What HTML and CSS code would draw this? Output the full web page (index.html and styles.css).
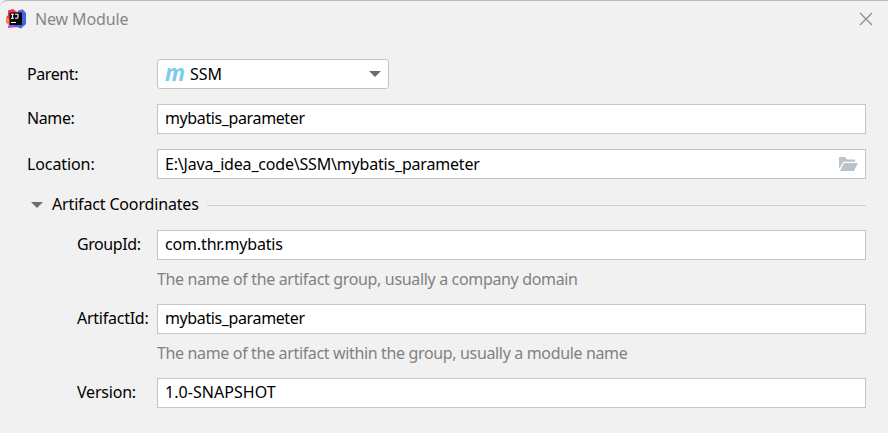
FILE: index.html
```html
<!DOCTYPE html>
<html lang="en">
<head>
<meta charset="utf-8">
<title>New Module</title>
<link rel="stylesheet" href="styles.css">
</head>
<body>
<main class="dialog">
  <header class="titlebar">
    <svg class="logo" width="20" height="20" viewBox="0 0 20 20">
      <path d="M2 1.500 7 0l4 3-5 8-6-2 2-3z" fill="#fc3158"/>
      <path d="M0 9l4 1v6l-4-2z" fill="#f68b2a"/>
      <path d="M3 14l6 1 3 3-10 1z" fill="#b14bd8"/>
      <path d="M9 4l7-3.500L20 4v11l-5 4.500L8 17z" fill="#3e67dc"/>
      <path d="M12 1.500l5-1 2 3-7 1z" fill="#6a5be4"/>
      <rect x="3.500" y="3.500" width="12.500" height="12.500" fill="#080808"/>
      <path d="M5 5.200h3M6.500 5.200v4M5 9.200h3M9 5.200h3v3q0 1-1 1H9M5 13.500h5" stroke="#fff" stroke-width="1.100" fill="none"/>
    </svg>
    <h1 class="title"><span class="t t-title">New Module</span></h1>
    <svg class="close" width="14" height="14" viewBox="0 0 14 14"><path d="M1 1l12 12M13 1L1 13" stroke="#8b8b8b" stroke-width="1.200"/></svg>
  </header>
  <form class="form">
    <div class="row row-parent">
      <span class="label"><span class="t t-parent">Parent:</span></span>
      <div class="field select">
        <span class="maven">m</span>
        <span class="t t-ssm">SSM</span>
        <svg class="arrow" width="12" height="6" viewBox="0 0 12 6"><path d="M0 0h12L6 6z" fill="#6e6e6e"/></svg>
      </div>
    </div>
    <div class="row row-name">
      <span class="label"><span class="t t-name">Name:</span></span>
      <div class="field"><span class="t t-module">mybatis_parameter</span></div>
    </div>
    <div class="row row-location">
      <span class="label"><span class="t t-location">Location:</span></span>
      <div class="field"><span class="t t-path">E:\Java_idea_code\SSM\mybatis_parameter</span>
        <svg class="folder" width="19" height="14" viewBox="0 0 19 14"><path d="M0 12V0h6l2 2.500h8v2.300H4.500z" fill="#bcc3c8"/><path d="M5 6h14l-4 8H1z" fill="#bcc3c8"/></svg>
      </div>
    </div>
    <div class="section">
      <svg class="arrow" width="12" height="6" viewBox="0 0 12 6"><path d="M0 0h12L6 6z" fill="#6e6e6e"/></svg>
      <span class="section-name"><span class="t t-section">Artifact Coordinates</span></span>
      <span class="rule"></span>
    </div>
    <div class="row nested">
      <span class="label"><span class="t t-group">GroupId:</span></span>
      <div class="field"><span class="t t-groupvalue">com.thr.mybatis</span></div>
    </div>
    <p class="hint"><span class="t t-hint1">The name of the artifact group, usually a company domain</span></p>
    <div class="row nested">
      <span class="label"><span class="t t-artifact">ArtifactId:</span></span>
      <div class="field"><span class="t t-module">mybatis_parameter</span></div>
    </div>
    <p class="hint"><span class="t t-hint2">The name of the artifact within the group, usually a module name</span></p>
    <div class="row nested">
      <span class="label"><span class="t t-version">Version:</span></span>
      <div class="field"><span class="t t-versionvalue">1.0-SNAPSHOT</span></div>
    </div>
  </form>
</main>
</body>
</html>
```
FILE: styles.css
```css
* { box-sizing: border-box; }
body { margin: 0; background: #f1f1f1; }
.dialog {
  width: 888px;
  height: 433px;
  overflow: hidden;
  background: #f1f1f1;
  border-top: 1px solid #b9b9b9;
  border-top-left-radius: 7px;
  color: #000;
  font: 16px/22px "Noto Sans", "Open Sans", sans-serif;
}
.titlebar { display: flex; align-items: center; height: 36px; padding: 0 15px 0 6px; }
.logo { margin-right: 9px; }
.title { flex: 1; margin: 0; font-size: 16px; font-weight: 400; color: #868686; }
.form { display: flex; flex-direction: column; padding: 22px 22px 0 27px; }
.row { display: flex; align-items: center; height: 30px; }
.t { white-space: nowrap; }
.t-title { letter-spacing: -0.12px; }
.t-parent { letter-spacing: -0.4px; }
.t-name { letter-spacing: -0.4px; }
.t-module { letter-spacing: -0.38px; }
.t-location { letter-spacing: -0.1px; }
.t-path { letter-spacing: -0.19px; }
.t-section { letter-spacing: -0.16px; }
.t-group { letter-spacing: -0.42px; }
.t-groupvalue { letter-spacing: -0.15px; }
.t-artifact { letter-spacing: -0.25px; }
.t-hint1 { letter-spacing: -0.34px; }
.t-hint2 { letter-spacing: -0.35px; }
.t-version { letter-spacing: -0.2px; }
.t-versionvalue { letter-spacing: 0.04px; }
.label { width: 130px; flex: none; }
.field {
  display: flex;
  align-items: center;
  flex: 1;
  height: 30px;
  padding: 0 7px 2px;
  background: #fff;
  border: 1px solid #c4c4c4;
}
.select { flex: none; width: 232px; border-radius: 3px; padding-bottom: 0; }
.maven { width: 21px; margin-right: 4px; color: #78cdec; font: italic 700 24px/22px "Open Sans", sans-serif; letter-spacing: -1px; transform: translateY(-2px) scaleX(0.92); transform-origin: left; }
.select .arrow { margin-left: auto; }
.row-name, .row-location { margin-top: 15px; }
.row-location .field { padding-bottom: 0; }
.row-name .label { padding-bottom: 2px; }
.folder { margin-left: auto; }
.section { display: flex; align-items: center; height: 22px; margin: 15px 0 14px; padding-left: 4px; }
.section-name { margin: -1px 0 1px 9px; width: 155px; }
.rule { flex: 1; height: 1px; background: #d0d0d0; }
.nested { padding-left: 50px; }
.nested .label { width: 80px; padding-bottom: 2px; }
.hint { height: 22px; margin: 8px 0 14px 130px; color: #818181; }
```
